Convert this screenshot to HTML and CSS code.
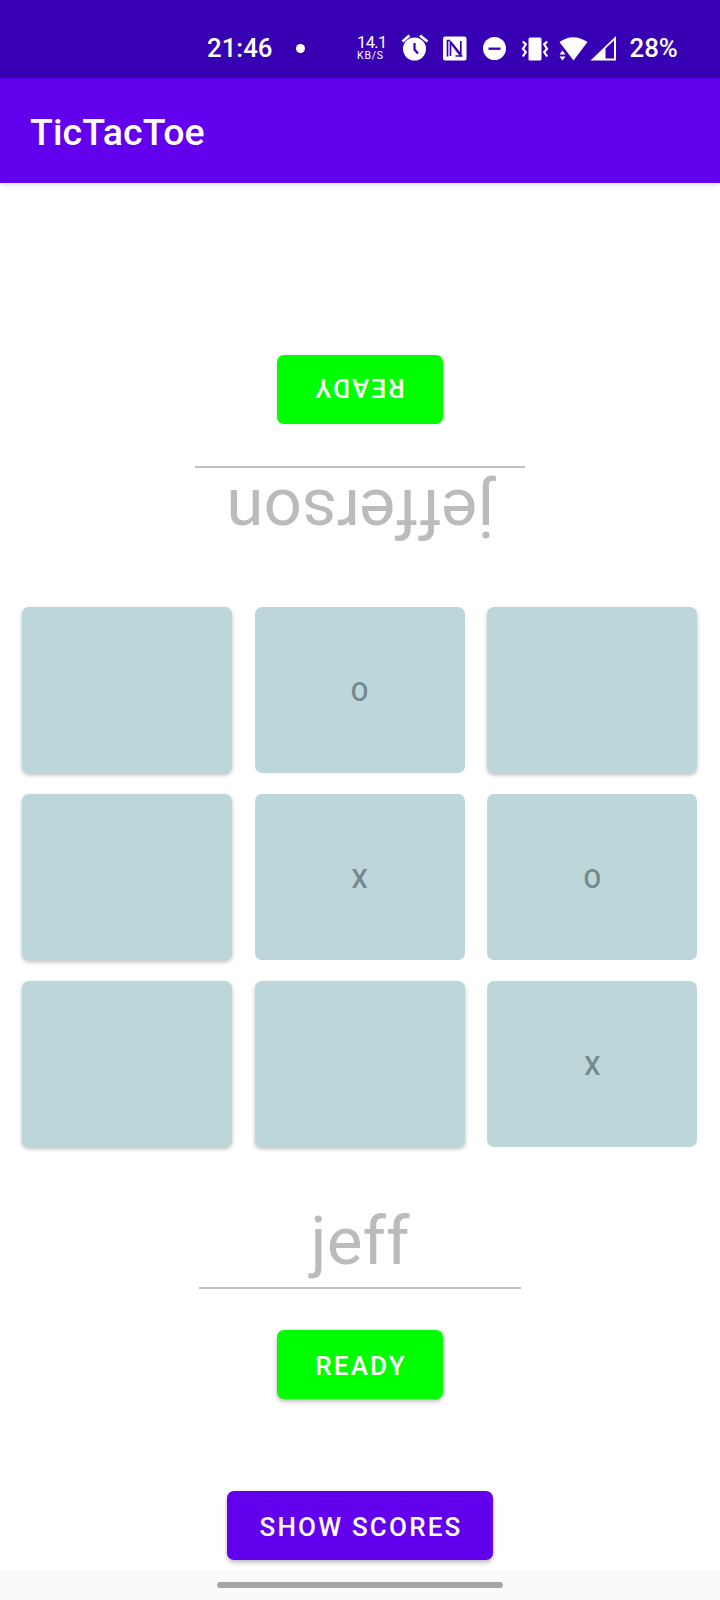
FILE: index.html
```html
<!DOCTYPE html>
<html lang="en">
<head>
<meta charset="utf-8">
<title>TicTacToe</title>
<link rel="stylesheet" href="styles.css">
</head>
<body>
<div class="screen">
  <div class="status">
    <span class="clock">21:46</span>
    <span class="dot"></span>
    <span class="speed"><span class="rate">14.1</span><span class="unit">KB/S</span></span>
    <svg class="icons" width="218" height="30" viewBox="0 0 218 30">
      <g fill="#fff">
        <circle cx="16.500" cy="16" r="11.500"/>
        <path d="M4.500 8.500L11.500 2.500M29.500 8.500L22 2.500" fill="none" stroke="#fff" stroke-width="2.800"/>
        <path d="M16.500 10v6.500l3.500 4" fill="none" stroke="#3700b3" stroke-width="2.200"/>
        <rect x="45" y="3.500" width="23.500" height="24" rx="2"/>
        <path d="M52.200 7.500h-2.700v16M52.500 23V9.500L62.500 22.500M62.800 8v13.500L52.500 8.500M57.500 23h7" fill="none" stroke="#3700b3" stroke-width="1.700"/>
        <circle cx="96.500" cy="15.500" r="11.500"/>
        <path d="M90.500 15.700h12" stroke="#3700b3" stroke-width="2.300"/>
        <rect x="130.500" y="4.500" width="13" height="23" rx="1.500"/>
        <path d="M124.800 8.500l3 2.800-2.800 4.500 2.800 3.200-3 4.500M149.200 8.500l-3 2.800 2.800 4.500-2.800 3.200 3 4.500" fill="none" stroke="#fff" stroke-width="2.200"/>
        <path d="M161.500 9q13.500-9.500 28 0L175.500 27.500Z"/>
        <path d="M164.500 17.500l3 4h-6zM164.500 27.500l3-4h-6z"/>
        <path d="M192.500 27.500L218 3V27.500ZM207.500 15.500V25.500h8.500V7.500Z" fill-rule="evenodd"/>
      </g>
    </svg>
    <span class="battery">28%</span>
  </div>
  <div class="appbar"><h1 class="title">TicTacToe</h1></div>
  <main class="game">
    <section class="player flipped">
      <div class="name wide">jefferson</div>
      <button class="btn ready">READY</button>
    </section>
    <section class="board">
      <div class="tile"></div><div class="tile played">O</div><div class="tile"></div>
      <div class="tile"></div><div class="tile played">X</div><div class="tile played">O</div>
      <div class="tile"></div><div class="tile"></div><div class="tile played">X</div>
    </section>
    <section class="player">
      <div class="name">jeff</div>
      <button class="btn ready">READY</button>
    </section>
    <button class="btn scores">SHOW SCORES</button>
  </main>
  <footer class="nav"><span class="pill"></span></footer>
</div>
</body>
</html>
```
FILE: styles.css
```css
* { box-sizing: border-box; }
body { margin: 0; font-family: Roboto, sans-serif; background: #fff; }
.screen { width: 720px; height: 1600px; display: flex; flex-direction: column; overflow: hidden; }
.status { height: 78px; flex: none; background: #3700b3; color: #fff; display: flex; align-items: center; padding: 18px 0 0 207px; font-weight: 500; }
.clock { font-size: 25.8px; width: 88.5px; line-height: 30px; }
.dot { width: 9px; height: 9px; border-radius: 50%; background: #fff; margin-right: 52.5px; }
.speed { width: 41px; display: flex; flex-direction: column; font-weight: 400; }
.rate { font-size: 16.5px; line-height: 15px; letter-spacing: -.6px; }
.unit { font-size: 10.5px; line-height: 11px; letter-spacing: .8px; }
.icons { flex: none; margin-right: 13.5px; }
.battery { font-size: 25.8px; line-height: 30px; }
.appbar { height: 105px; flex: none; background: #6200ee; display: flex; align-items: center; padding: 3px 30px 0; box-shadow: 0 1px 7px rgba(0,0,0,.18); }
.title { margin: 0; color: #fff; font-size: 37.5px; font-weight: 500; line-height: 44px; letter-spacing: .1px; }
.game { flex: 1; display: flex; flex-direction: column; align-items: center; padding-top: 172px; }
.player { display: flex; flex-direction: column; align-items: center; }
.flipped { transform: rotate(180deg); }
.name { width: 322px; height: 88px; border-bottom: 2px solid #bfbfbf; color: #bbb; font-size: 67.5px; line-height: 80px; text-align: center; margin-bottom: 41px; }
.wide { width: 330px; margin-bottom: 42px; line-height: 81px; }
.btn { border: 0; border-radius: 7px; color: #fff; font: 500 26px/30px Roboto, sans-serif; letter-spacing: 2.2px; padding: 2px 0 0 2px; height: 69px; box-shadow: 0 3px 4px rgba(0,0,0,.22), 0 0 3px rgba(0,0,0,.12); }
.ready { width: 166px; background: #0f0; }
.flipped .btn { box-shadow: 0 0 3px rgba(0,0,0,.15); }
.scores { width: 266px; background: #6200ee; margin-top: 92px; }
.board { display: grid; grid-template-columns: repeat(3, 210px); grid-auto-rows: 166px; gap: 21px 22.75px; margin: 53px 0 54px; position: relative; left: -.5px; }
.tile { border-radius: 7px; background: #bdd6da; box-shadow: 0 2px 4px rgba(0,0,0,.26); display: flex; align-items: center; justify-content: center; font-size: 25.5px; font-weight: 500; color: #73898c; padding-top: 3px; }
.played { box-shadow: none; }
.nav { height: 30px; flex: none; background: #fafafa; display: flex; justify-content: center; padding-top: 12px; }
.pill { width: 286px; height: 6px; border-radius: 3px; background: #a5a5a5; }
```
